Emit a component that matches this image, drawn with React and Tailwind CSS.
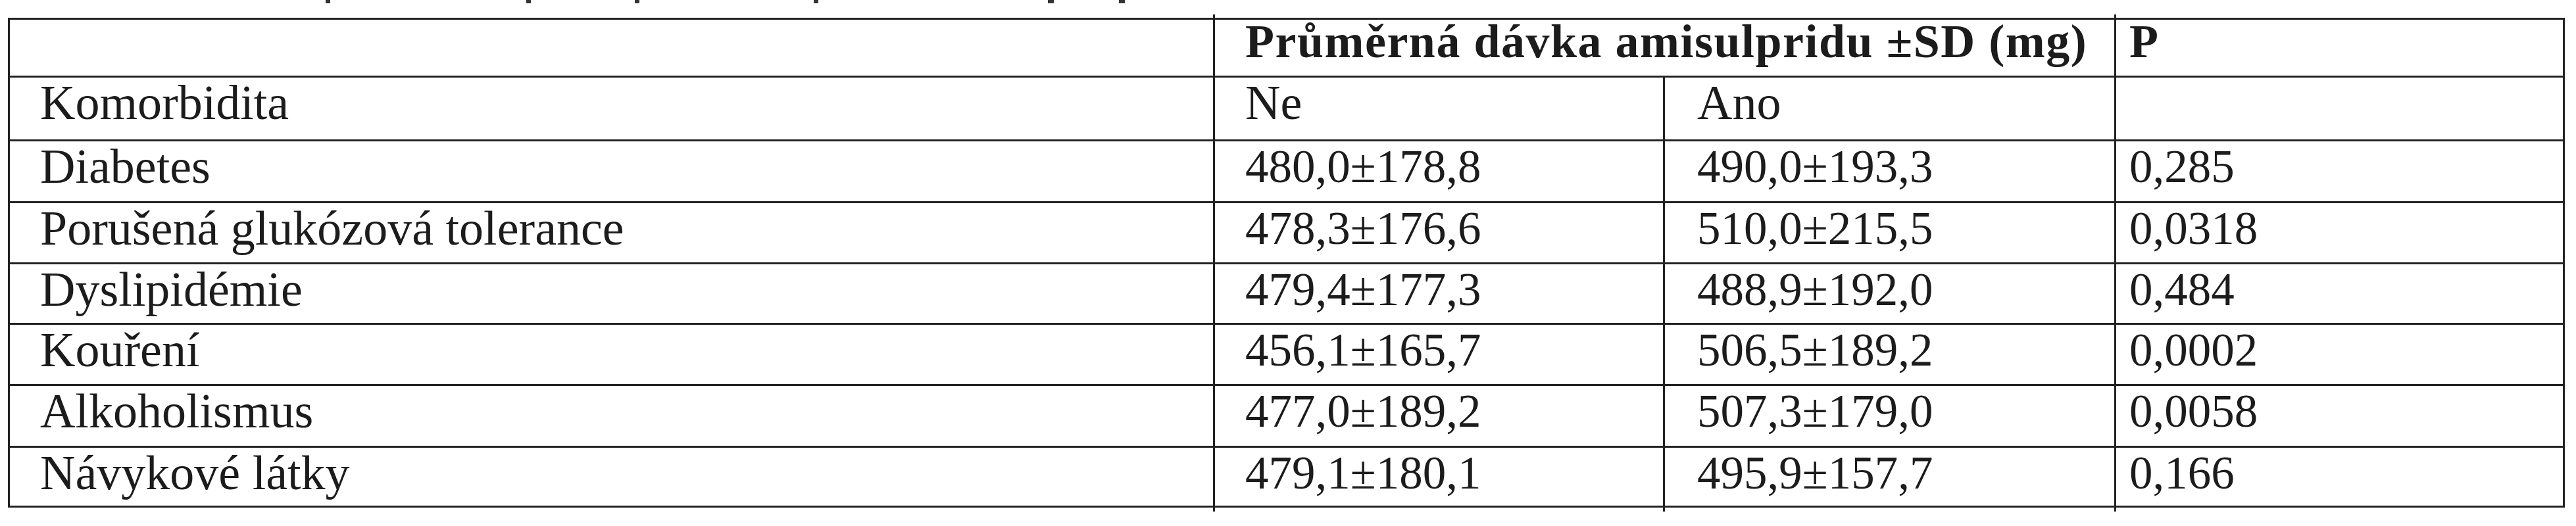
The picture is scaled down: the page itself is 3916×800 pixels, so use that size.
const rows = [
  { name: "Diabetes", ne: "480,0±178,8", ano: "490,0±193,3", p: "0,285", h: "h-[94px]" },
  { name: "Porušená glukózová tolerance", ne: "478,3±176,6", ano: "510,0±215,5", p: "0,0318", h: "h-[93px]" },
  { name: "Dyslipidémie", ne: "479,4±177,3", ano: "488,9±192,0", p: "0,484", h: "h-[92px]" },
  { name: "Kouření", ne: "456,1±165,7", ano: "506,5±189,2", p: "0,0002", h: "h-[93px]" },
  { name: "Alkoholismus", ne: "477,0±189,2", ano: "507,3±179,0", p: "0,0058", h: "h-[94px]" },
  { name: "Návykové látky", ne: "479,1±180,1", ano: "495,9±157,7", p: "0,166", h: "h-[91px]" },
];

function App() {
  return (
    <div className="w-[3916px] h-[800px] bg-white text-[#1c1c1c] text-[71px] font-['Liberation_Serif','Times_New_Roman',serif]">
      {/* tail ends of the caption line cut off above */}
      <div className="flex h-[5px]">
        <span className="ml-[495px] w-[7px] bg-[#333]" />
        <span className="ml-[298px] w-[7px] bg-[#333]" />
        <span className="ml-[158px] w-[7px] bg-[#333]" />
        <span className="ml-[265px] w-[7px] bg-[#333]" />
        <span className="ml-[349px] w-[9px] bg-[#333]" />
        <span className="ml-[99px] w-[9px] bg-[#333]" />
      </div>

      {/* divider ticks above the table */}
      <div className="mt-[17px] ml-[15px] grid grid-cols-[1829px_1370px_682px] h-[5px]">
        <div />
        <div className="border-l-[3px] border-[#222]" />
        <div className="border-l-[3px] border-[#222]" />
      </div>

      <div className="ml-[12px] w-[3887px] border-[3px] border-[#222]">
        <div className="grid grid-cols-[1829px_684px_686px_682px]">
          {/* header */}
          <div className="h-[85px]" />
          <div className="col-span-2 h-[85px] border-l-[3px] border-[#222] pl-[46px] leading-[67px] text-[72px] font-bold tracking-[1.5px] whitespace-nowrap">
            Průměrná dávka amisulpridu ±SD (mg)
          </div>
          <div className="h-[85px] border-l-[3px] border-[#222] pl-[20px] leading-[67px] text-[72px] font-bold">P</div>

          <div className="h-[97px] border-t-[3px] border-[#222] pl-[46px] leading-[77px] text-[74px]">Komorbidita</div>
          <div className="h-[97px] border-t-[3px] border-l-[3px] border-[#222] pl-[46px] leading-[77px] text-[74px]">Ne</div>
          <div className="h-[97px] border-t-[3px] border-l-[3px] border-[#222] pl-[49px] leading-[77px] text-[74px]">Ano</div>
          <div className="h-[97px] border-t-[3px] border-l-[3px] border-[#222]" />

          {rows.map((r) => (
            <div key={r.name} className="contents">
              <div className={`${r.h} border-t-[3px] border-[#222] pl-[46px] leading-[77px] text-[74px] whitespace-nowrap`}>{r.name}</div>
              <div className={`${r.h} border-t-[3px] border-l-[3px] border-[#222] pl-[46px] leading-[77px]`}>{r.ne}</div>
              <div className={`${r.h} border-t-[3px] border-l-[3px] border-[#222] pl-[49px] leading-[77px]`}>{r.ano}</div>
              <div className={`${r.h} border-t-[3px] border-l-[3px] border-[#222] pl-[20px] leading-[77px]`}>{r.p}</div>
            </div>
          ))}
        </div>
      </div>

      {/* divider ticks below the table */}
      <div className="ml-[15px] grid grid-cols-[1829px_684px_686px_682px] h-[6px]">
        <div />
        <div className="border-l-[3px] border-[#222]" />
        <div className="border-l-[3px] border-[#222]" />
        <div className="border-l-[3px] border-[#222]" />
      </div>
    </div>
  );
}

export default App;
